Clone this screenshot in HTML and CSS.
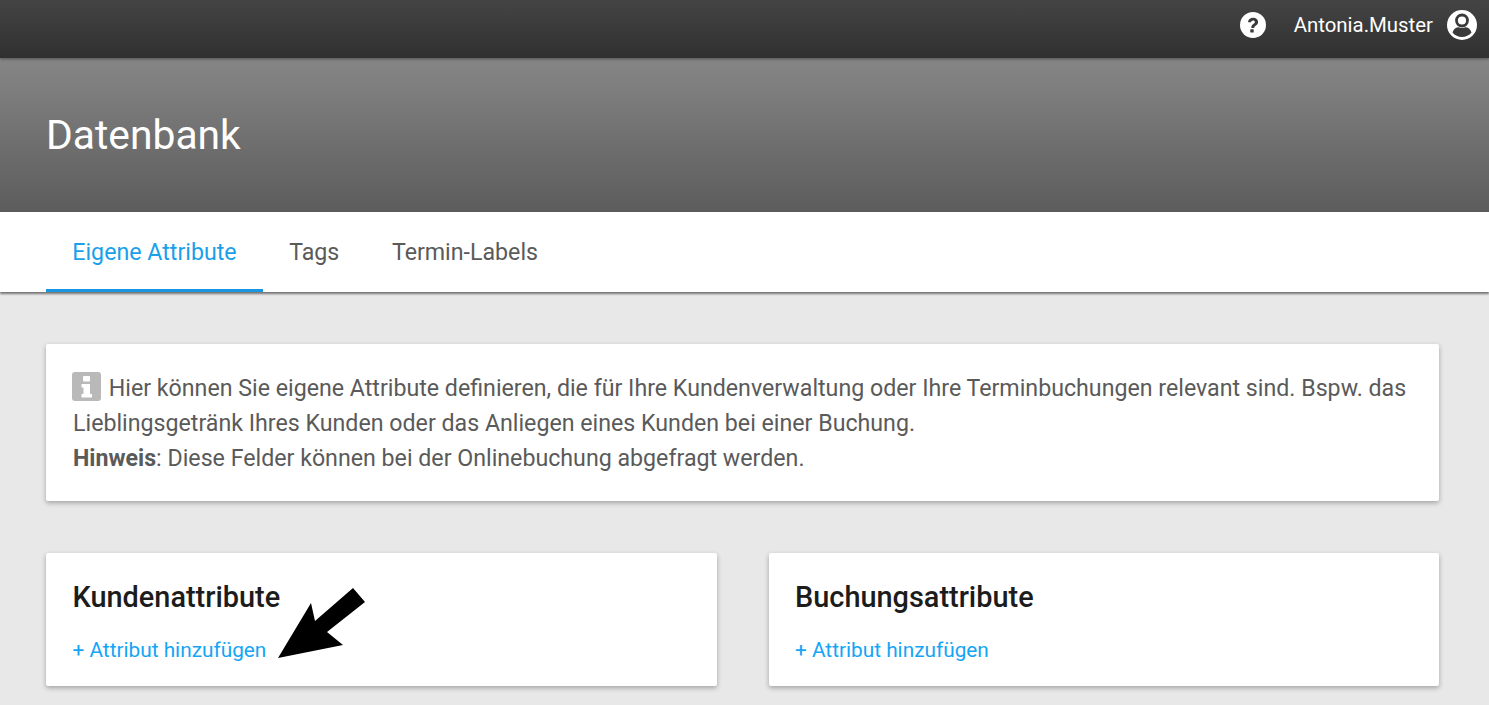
FILE: index.html
```html
<!DOCTYPE html>
<html lang="de">

<head>
    <meta charset="UTF-8">
    <meta name="viewport" content="width=device-width, initial-scale=1.0">
    <title>Datenbank</title>
    <link rel="stylesheet" href="styles.css">
</head>

<body>
    <div class="topbar">
        <svg class="help-icon" viewBox="0 0 26 26">
            <circle cx="13" cy="13" r="13" fill="#fff" />
            <path d="M8 10.200c.2-3 2.400-4.500 5.100-4.500 2.900 0 5 1.700 5 4.200 0 1.900-1.100 2.900-2.400 3.800-1.100.8-1.400 1.200-1.400 2.300h-3c-.1-2 .6-3 2-4 1-.7 1.600-1.200 1.600-2 0-.9-.8-1.500-1.800-1.500-1.100 0-1.900.7-2 1.800z" fill="#3a3a3a" />
            <rect x="10.300" y="17.200" width="3.400" height="3.400" rx=".5" fill="#3a3a3a" />
        </svg>
        <span class="user-name">Antonia.Muster</span>
        <svg class="user-icon" viewBox="0 0 30 30">
            <circle cx="15" cy="15" r="15" fill="#fff" />
            <circle cx="15" cy="10.500" r="5.500" fill="none" stroke="#3a3a3a" stroke-width="2.800" />
            <path d="M5.500 22.500c1-3.700 3.700-5.300 6-5.300 1 .5 2 .8 3.500.8s2.500-.3 3.500-.8c2.300 0 5 1.600 6 5.300-2.300 2.800-5.800 4.500-9.500 4.500s-7.200-1.700-9.500-4.500z" fill="#3a3a3a" />
        </svg>
    </div>

    <div class="hero">
        <h1 class="hero-title">Datenbank</h1>
    </div>

    <div class="tabs">
        <a class="tab active">Eigene Attribute</a>
        <a class="tab">Tags</a>
        <a class="tab">Termin-Labels</a>
    </div>

    <div class="content">
        <div class="card info">
            <svg class="info-icon" viewBox="0 0 29 29">
                <rect width="29" height="29" rx="3" fill="#b9b9b9" />
                <rect x="11" y="4" width="7" height="5.500" rx="1" fill="#fff" />
                <path d="M9.500 12h8.500v10h2v3.500H9.500V22h2v-6.500h-2z" fill="#fff" />
            </svg>
            Hier können Sie eigene Attribute definieren, die für Ihre Kundenverwaltung oder Ihre Terminbuchungen relevant sind. Bspw. das Lieblingsgetränk Ihres Kunden oder das Anliegen eines Kunden bei einer Buchung.<br>
            <b>Hinweis</b>: Diese Felder können bei der Onlinebuchung abgefragt werden.
        </div>

        <div class="columns">
            <div class="card attr">
                <h2 class="attr-title">Kundenattribute</h2>
                <a class="add-link">+ Attribut hinzufügen</a>
                <svg class="arrow" viewBox="0 0 88 70">
                    <polygon points="0,70 33,15 37,33 75,0 87,14 49,44 65,57" fill="#000" />
                </svg>
            </div>
            <div class="card attr">
                <h2 class="attr-title">Buchungsattribute</h2>
                <a class="add-link">+ Attribut hinzufügen</a>
            </div>
        </div>
    </div>
</body>

</html>
```

FILE: styles.css
```css
html,
body {
    margin: 0;
    height: 705px;
    overflow: hidden;
}

body {
    background-color: #e8e8e8;
    font-family: Roboto, "Liberation Sans", sans-serif;
    color: #5a5a5a;
}

.topbar {
    position: relative;
    height: 58px;
    box-sizing: border-box;
    padding: 0 12px 8px 0;
    display: flex;
    align-items: center;
    justify-content: flex-end;
    background: linear-gradient(#444, #303030);
    box-shadow: 0 1px 3px rgba(0, 0, 0, .4);
    color: #fff;
    font-size: 20.400px;
}

.help-icon {
    width: 26px;
    height: 26px;
    margin-right: 28px;
}

.user-name {
    margin-right: 14px;
}

.user-icon {
    width: 30px;
    height: 30px;
}

.hero {
    height: 154px;
    box-sizing: border-box;
    padding: 50px 0 0 46px;
    background: linear-gradient(#868686, #5c5c5c);
}

.hero-title {
    margin: 0;
    font-size: 40.800px;
    line-height: 54px;
    font-weight: 400;
    color: #fff;
}

.tabs {
    height: 80px;
    box-sizing: border-box;
    padding-left: 46px;
    display: flex;
    background-color: #fff;
    box-shadow: 0 2px 2px rgba(0, 0, 0, .5);
}

.tab {
    padding: 0 26.300px;
    font-size: 23.200px;
    line-height: 81px;
}

.tab.active {
    color: #1a9fe8;
    border-bottom: 3px solid #1a96e0;
    height: 77px;
}

.content {
    padding: 52px 50px 0 46px;
}

.card {
    background-color: #fff;
    border-radius: 2px;
    box-shadow: 0 2px 5px rgba(0, 0, 0, .3);
    box-sizing: border-box;
}

.info {
    height: 157px;
    padding: 27px 27px 0;
    font-size: 23.200px;
    line-height: 35px;
}

.info b {
    font-weight: 700;
}

.info-icon {
    width: 29px;
    height: 29px;
    vertical-align: -5px;
    margin-left: -1px;
    margin-right: 2px;
}

.columns {
    margin-top: 52px;
    display: grid;
    grid-template-columns: 1fr 1fr;
    gap: 52px;
}

.attr {
    position: relative;
    height: 133px;
    padding: 25px 26.500px 0;
}

.attr-title {
    margin: 0 0 20px;
    font-size: 28.900px;
    line-height: 38px;
    font-weight: 500;
    color: #1c1c1c;
}

.add-link {
    font-size: 20.800px;
    line-height: 28px;
    color: #14a5f5;
}

.arrow {
    position: absolute;
    left: 232px;
    top: 35px;
    width: 88px;
    height: 70px;
}
```
